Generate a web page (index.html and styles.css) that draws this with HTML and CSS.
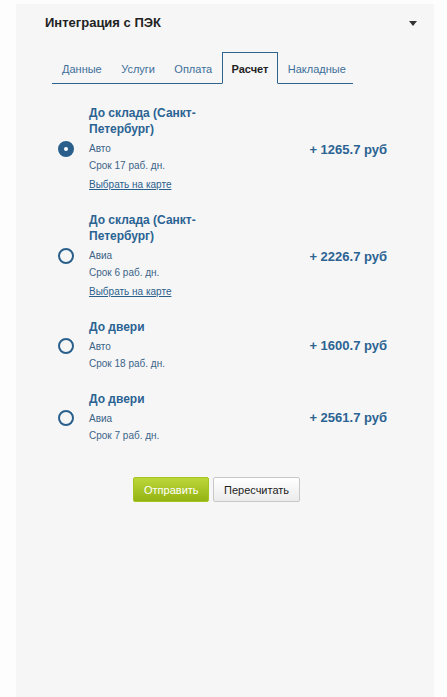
FILE: index.html
```html
<!DOCTYPE html>
<html>
<head>
  <title>Интеграция с ПЭК</title>
  <link rel="stylesheet" href="styles.css">
</head>
<body>

  <div class="panel">
    <div class="panel-head">
      <h3>Интеграция с ПЭК</h3>
      <span class="caret"></span>
    </div>

    <ul class="tabs">
      <li>Данные</li>
      <li>Услуги</li>
      <li>Оплата</li>
      <li class="active">Расчет</li>
      <li>Накладные</li>
    </ul>

    <div class="rates">
      <label class="rate">
        <span class="radio checked"></span>
        <div class="info">
          <div class="name">До склада (Санкт-Петербург)</div>
          <div class="meta">Авто</div>
          <div class="meta">Срок 17 раб. дн.</div>
          <a class="map-link" href="#">Выбрать на карте</a>
        </div>
        <div class="price">+ 1265.7 руб</div>
      </label>

      <label class="rate">
        <span class="radio"></span>
        <div class="info">
          <div class="name">До склада (Санкт-Петербург)</div>
          <div class="meta">Авиа</div>
          <div class="meta">Срок 6 раб. дн.</div>
          <a class="map-link" href="#">Выбрать на карте</a>
        </div>
        <div class="price">+ 2226.7 руб</div>
      </label>

      <label class="rate">
        <span class="radio"></span>
        <div class="info">
          <div class="name">До двери</div>
          <div class="meta">Авто</div>
          <div class="meta">Срок 18 раб. дн.</div>
        </div>
        <div class="price">+ 1600.7 руб</div>
      </label>

      <label class="rate">
        <span class="radio"></span>
        <div class="info">
          <div class="name">До двери</div>
          <div class="meta">Авиа</div>
          <div class="meta">Срок 7 раб. дн.</div>
        </div>
        <div class="price">+ 2561.7 руб</div>
      </label>
    </div>

    <div class="actions">
      <button class="btn btn-send">Отправить</button>
      <button class="btn">Пересчитать</button>
    </div>
  </div>

</body>
</html>
```

FILE: styles.css
```css
body {
  margin: 0;
  background: #fdfdfd;
  font-family: "Liberation Sans", Arial, sans-serif;
  color: #222;
}

.panel {
  margin: 4px 13px 0 16px;
  min-height: 693px;
  background: #f6f6f7;
  padding: 10px 47px 0 29px;
}

.panel-head {
  display: flex;
  align-items: center;
  justify-content: space-between;
  margin-right: -30px;
}

.panel-head h3 {
  margin: 0;
  font-size: 13px;
  line-height: 18px;
  font-weight: bold;
  color: #222;
}

.caret {
  width: 0;
  height: 0;
  border-left: 4px solid transparent;
  border-right: 4px solid transparent;
  border-top: 5px solid #333;
}

.tabs {
  display: flex;
  list-style: none;
  margin: 20px 0 0 7px;
  padding: 0;
  width: 301px;
  border-bottom: 1px solid #2e6390;
}

.tabs li {
  padding: 9px 8.7px 7px;
  font-size: 11px;
  line-height: 14px;
  color: #3d6f99;
  border: 1px solid transparent;
  margin-bottom: -1px;
}

.tabs li:first-child {
  padding-left: 9px;
}

.tabs li.active {
  border-color: #2e6390;
  border-bottom-color: #f6f6f7;
  color: #222;
  font-weight: bold;
}

.rates {
  margin-top: 21px;
  padding-left: 13px;
}

.rate {
  display: flex;
  align-items: center;
  margin-bottom: 19px;
}

.radio {
  flex: none;
  box-sizing: border-box;
  width: 16px;
  height: 16px;
  border: 2px solid #2a5f8c;
  border-radius: 50%;
  margin-right: 15px;
  position: relative;
}

.radio.checked {
  background: #2a5f8c;
}

.radio.checked::after {
  content: "";
  position: absolute;
  left: 4px;
  top: 4px;
  width: 4px;
  height: 4px;
  border-radius: 50%;
  background: #fff;
}

.info {
  width: 150px;
}

.name {
  font-size: 12px;
  line-height: 16px;
  font-weight: bold;
  color: #2b6392;
  margin-bottom: 3px;
}

.meta {
  font-size: 10px;
  line-height: 17px;
  color: #3b6487;
}

.map-link {
  font-size: 10px;
  line-height: 16px;
  color: #2b5f8c;
  text-decoration: underline;
}

.price {
  margin-left: auto;
  font-size: 13px;
  font-weight: bold;
  color: #2b6392;
}

.actions {
  display: flex;
  gap: 4px;
  padding: 14px 0 0 88px;
}

.btn {
  height: 25px;
  padding: 0 10px;
  font-family: inherit;
  font-size: 11px;
  color: #222;
  border: 1px solid #c8c8c8;
  border-radius: 2px;
  background: linear-gradient(#ffffff, #ebebeb);
}

.btn-send {
  width: 76px;
  color: #fff;
  border-color: #a4c41f;
  background: linear-gradient(#bcd63a, #94b413);
}
```
